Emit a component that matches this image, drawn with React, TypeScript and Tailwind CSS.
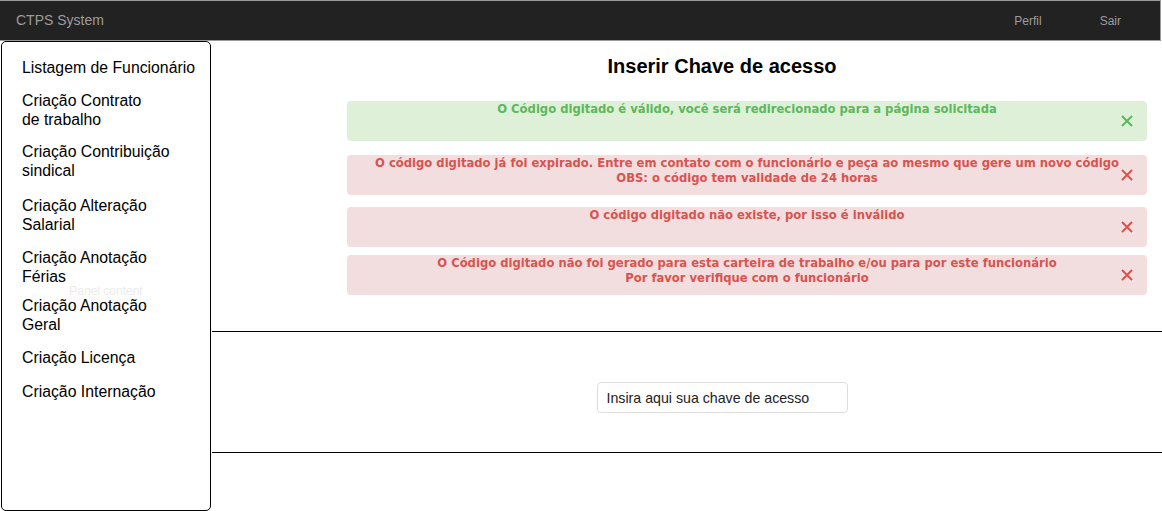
const menuItems = [
  { lines: ["Listagem de Funcionário"], mt: "mt-0" },
  { lines: ["Criação Contrato", "de trabalho"], mt: "mt-[14px]" },
  { lines: ["Criação Contribuição", "sindical"], mt: "mt-[13px]" },
  { lines: ["Criação Alteração", "Salarial"], mt: "mt-[16px]" },
  { lines: ["Criação Anotação", "Férias"], mt: "mt-[14px]" },
  { lines: ["Criação Anotação", "Geral"], mt: "mt-[10px]" },
  { lines: ["Criação Licença"], mt: "mt-[14px]" },
  { lines: ["Criação Internação"], mt: "mt-[15px]" },
]

const alerts = [
  {
    type: "success",
    lines: ["O Código digitado é válido, você será redirecionado para a página solicitada"],
    margin: "mt-[23px]",
  },
  {
    type: "danger",
    lines: [
      "O código digitado já foi expirado. Entre em contato com o funcionário e peça ao mesmo que gere um novo código",
      "OBS: o código tem validade de 24 horas",
    ],
    margin: "mt-[14px]",
  },
  {
    type: "danger",
    lines: ["O código digitado não existe, por isso é inválido"],
    margin: "mt-[12px]",
  },
  {
    type: "danger",
    lines: [
      "O Código digitado não foi gerado para esta carteira de trabalho e/ou para por este funcionário",
      "Por favor verifique com o funcionário",
    ],
    margin: "mt-[8px]",
  },
]

function CloseIcon() {
  return (
    <svg
      className="absolute right-[14px] top-1/2 -translate-y-1/2"
      width="12"
      height="12"
      viewBox="0 0 12 12"
      fill="none"
      stroke="currentColor"
      strokeWidth="2"
    >
      <path d="M1 1L11 11M11 1L1 11" />
    </svg>
  )
}

export default function App() {
  return (
    <div className="w-[1162px] h-[511px] bg-white font-['Liberation_Sans',Arial,sans-serif] overflow-hidden">
      {/* Navbar */}
      <nav className="w-[1161px] h-[41px] bg-[#222222] border-t border-r border-b border-[#9a9a9a] flex items-center text-[#9d9d9d]">
        <span className="pl-4 text-[14px]">CTPS System</span>
        <div className="ml-auto flex gap-[58px] pr-[39px] text-[12px]">
          <a href="#">Perfil</a>
          <a href="#">Sair</a>
        </div>
      </nav>

      <div className="flex">
        {/* Sidebar */}
        <aside className="relative ml-px w-[210px] h-[470px] border border-black rounded-[5px] pt-[16px] pl-5 text-[15.8px] leading-[19px] text-black">
          <span className="absolute left-0 right-0 top-[240px] text-center text-[12px] text-[#ebebeb]">Panel content</span>
          {menuItems.map((item, i) => (
            <div key={i} className={`relative ${item.mt}`}>
              {item.lines.map((l, j) => (
                <div key={j}>{l}</div>
              ))}
            </div>
          ))}
        </aside>

        {/* Main */}
        <main className="flex-1">
          <h1 className="ml-[71px] pt-[13px] text-center text-[20px] leading-[24px] font-bold text-black">
            Inserir Chave de acesso
          </h1>

          <div className="ml-[136px] mr-[15px]">
            {alerts.map((a, i) => (
              <div
                key={i}
                className={`relative h-[40px] pt-px rounded-[4px] text-center font-['DejaVu_Sans',Verdana,sans-serif] font-bold text-[11.6px] leading-[15px] ${a.margin} ${
                  a.type === "success" ? "bg-[#dff0d8] text-[#5cb85c]" : "bg-[#f2dede] text-[#d9534f]"
                }`}
              >
                {a.lines.map((l, j) => (
                  <div key={j}>{l}</div>
                ))}
                <CloseIcon />
              </div>
            ))}
          </div>

          <div className="ml-px mt-[36px] border-t border-black" />
          <div className="ml-[71px] flex justify-center pt-[50px] pb-[39px]">
            <input
              className="w-[251px] h-[31px] border border-[#dddddd] rounded-[4px] px-[9px] text-[14.2px] text-[#222] placeholder:text-[#222] outline-none"
              placeholder="Insira aqui sua chave de acesso"
            />
          </div>
          <div className="ml-px border-t border-black" />
        </main>
      </div>
    </div>
  )
}
